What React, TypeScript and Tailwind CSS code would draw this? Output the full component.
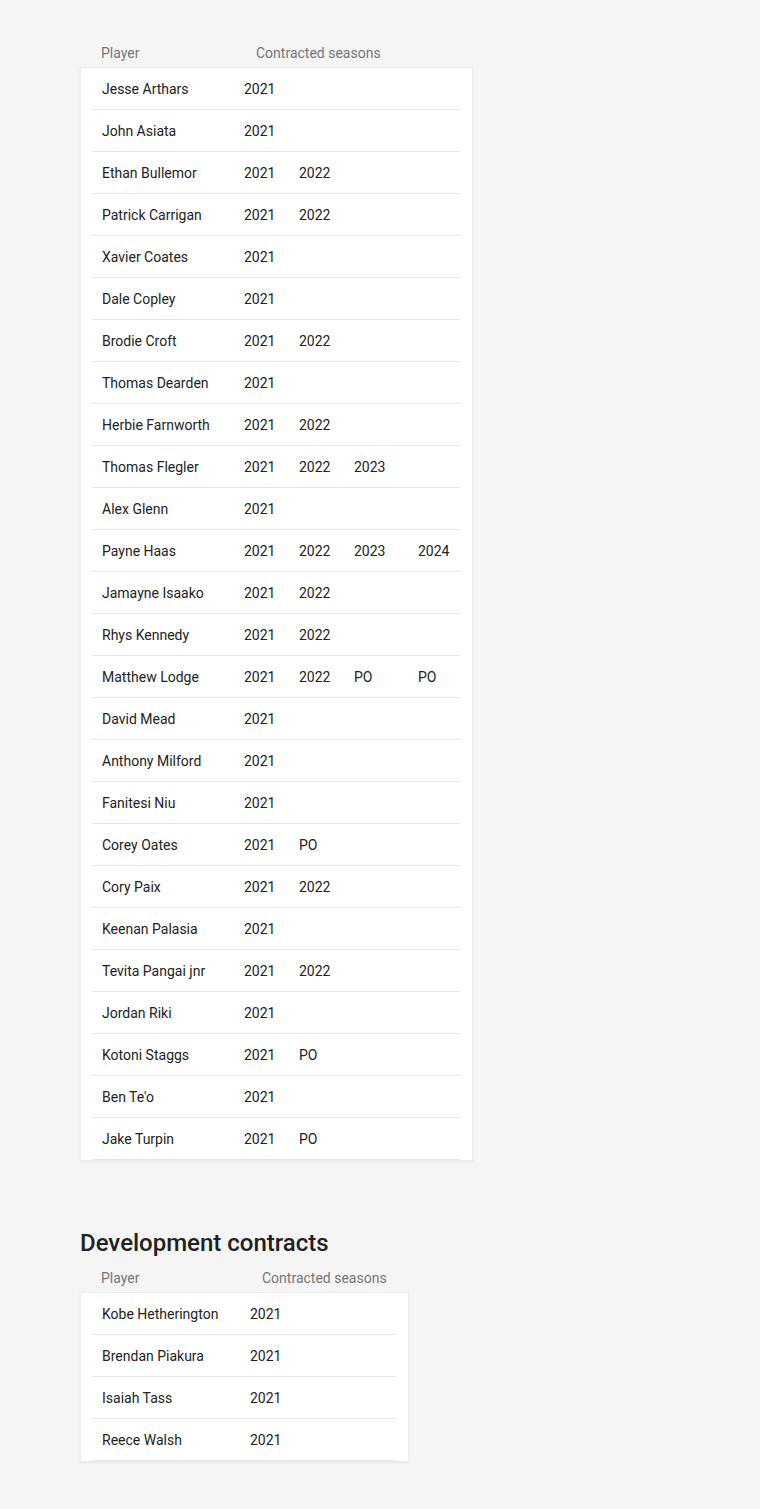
import React from "react";

type Row = { name: string; seasons: string[] };

const firstGrade: Row[] = [
  { name: "Jesse Arthars", seasons: ["2021"] },
  { name: "John Asiata", seasons: ["2021"] },
  { name: "Ethan Bullemor", seasons: ["2021", "2022"] },
  { name: "Patrick Carrigan", seasons: ["2021", "2022"] },
  { name: "Xavier Coates", seasons: ["2021"] },
  { name: "Dale Copley", seasons: ["2021"] },
  { name: "Brodie Croft", seasons: ["2021", "2022"] },
  { name: "Thomas Dearden", seasons: ["2021"] },
  { name: "Herbie Farnworth", seasons: ["2021", "2022"] },
  { name: "Thomas Flegler", seasons: ["2021", "2022", "2023"] },
  { name: "Alex Glenn", seasons: ["2021"] },
  { name: "Payne Haas", seasons: ["2021", "2022", "2023", "2024"] },
  { name: "Jamayne Isaako", seasons: ["2021", "2022"] },
  { name: "Rhys Kennedy", seasons: ["2021", "2022"] },
  { name: "Matthew Lodge", seasons: ["2021", "2022", "PO", "PO"] },
  { name: "David Mead", seasons: ["2021"] },
  { name: "Anthony Milford", seasons: ["2021"] },
  { name: "Fanitesi Niu", seasons: ["2021"] },
  { name: "Corey Oates", seasons: ["2021", "PO"] },
  { name: "Cory Paix", seasons: ["2021", "2022"] },
  { name: "Keenan Palasia", seasons: ["2021"] },
  { name: "Tevita Pangai jnr", seasons: ["2021", "2022"] },
  { name: "Jordan Riki", seasons: ["2021"] },
  { name: "Kotoni Staggs", seasons: ["2021", "PO"] },
  { name: "Ben Te'o", seasons: ["2021"] },
  { name: "Jake Turpin", seasons: ["2021", "PO"] },
];

const development: Row[] = [
  { name: "Kobe Hetherington", seasons: ["2021"] },
  { name: "Brendan Piakura", seasons: ["2021"] },
  { name: "Isaiah Tass", seasons: ["2021"] },
  { name: "Reece Walsh", seasons: ["2021"] },
];

const App: React.FC = () => {
  return (
    <div
      className="min-h-screen bg-[#f5f5f5] pl-[80px] pt-[39px] pb-[48px] text-[14px] text-[#222]"
      style={{ fontFamily: "Roboto, 'Liberation Sans', sans-serif" }}
    >
      {/* First grade squad */}
      <div className="w-[393px]">
        <div className="flex h-[28px] items-center text-[#757575]">
          <span className="w-[176px] pl-[21px]">Player</span>
          <span>Contracted seasons</span>
        </div>
        <div className="bg-white border border-[#ececec] shadow-[0_1px_2px_rgba(0,0,0,0.06)] pl-[11px] pr-[12px]">
          {firstGrade.map((row) => (
            <div
              key={row.name}
              className="grid grid-cols-[142px_55px_55px_64px_52px] h-[42px] pt-[2px] items-center border-b border-[#e6e6e6]"
            >
              <span className="pl-[10px]">{row.name}</span>
              {[0, 1, 2, 3].map((i) => (
                <span key={i} className="pl-[10px]">
                  {row.seasons[i] || ""}
                </span>
              ))}
            </div>
          ))}
        </div>
      </div>

      {/* Development contracts */}
      <h2 className="mt-[67px] mb-[6px] text-[24px] font-medium leading-[30px] text-[#212121]">
        Development contracts
      </h2>
      <div className="w-[329px]">
        <div className="flex h-[28px] items-center text-[#757575]">
          <span className="w-[182px] pl-[21px]">Player</span>
          <span>Contracted seasons</span>
        </div>
        <div className="bg-white border border-[#ececec] shadow-[0_1px_2px_rgba(0,0,0,0.06)] pl-[11px] pr-[12px]">
          {development.map((row) => (
            <div
              key={row.name}
              className="grid grid-cols-[148px_156px] h-[42px] pt-[2px] items-center border-b border-[#e6e6e6]"
            >
              <span className="pl-[10px]">{row.name}</span>
              <span className="pl-[10px]">{row.seasons[0]}</span>
            </div>
          ))}
        </div>
      </div>
    </div>
  );
};

export default App;
